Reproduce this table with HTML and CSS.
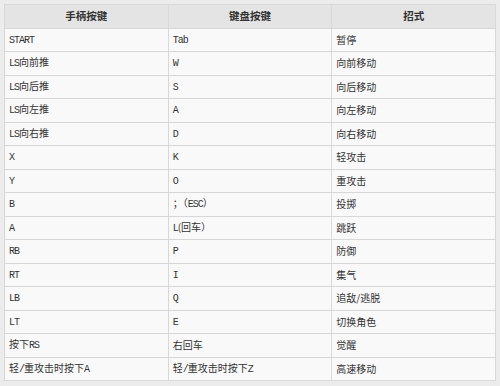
FILE: index.html
```html
<!DOCTYPE html>
<html lang="zh">
<head>
<meta charset="utf-8">
<title>按键</title>
<link rel="stylesheet" href="styles.css">
</head>
<body>
<table class="keys">
  <thead>
    <tr><th>手柄按键</th><th>键盘按键</th><th>招式</th></tr>
  </thead>
  <tbody>
    <tr><td><span class="en">START</span></td><td><span class="en">Tab</span></td><td>暂停</td></tr>
    <tr><td><span class="en">LS</span>向前推</td><td><span class="en">W</span></td><td>向前移动</td></tr>
    <tr><td><span class="en">LS</span>向后推</td><td><span class="en">S</span></td><td>向后移动</td></tr>
    <tr><td><span class="en">LS</span>向左推</td><td><span class="en">A</span></td><td>向左移动</td></tr>
    <tr><td><span class="en">LS</span>向右推</td><td><span class="en">D</span></td><td>向右移动</td></tr>
    <tr><td><span class="en">X</span></td><td><span class="en">K</span></td><td>轻攻击</td></tr>
    <tr><td><span class="en">Y</span></td><td><span class="en">O</span></td><td>重攻击</td></tr>
    <tr><td><span class="en">B</span></td><td>；（<span class="en">ESC</span>）</td><td>投掷</td></tr>
    <tr><td><span class="en">A</span></td><td><span class="en">L</span>(回车）</td><td>跳跃</td></tr>
    <tr><td><span class="en">RB</span></td><td><span class="en">P</span></td><td>防御</td></tr>
    <tr><td><span class="en">RT</span></td><td><span class="en">I</span></td><td>集气</td></tr>
    <tr><td><span class="en">LB</span></td><td><span class="en">Q</span></td><td>追敌/逃脱</td></tr>
    <tr><td><span class="en">LT</span></td><td><span class="en">E</span></td><td>切换角色</td></tr>
    <tr><td>按下<span class="en">RS</span></td><td>右回车</td><td>觉醒</td></tr>
    <tr><td>轻<span class="en">/</span>重攻击时按下<span class="en">A</span></td><td>轻<span class="en">/</span>重攻击时按下<span class="en">Z</span></td><td>高速移动</td></tr>
  </tbody>
</table>
</body>
</html>
```
FILE: styles.css
```css
html, body {
  margin: 0;
  background: #ececec;
}
body {
  padding: 4px;
  font-family: "Noto Sans CJK SC", "Liberation Sans", sans-serif;
  font-size: 10px;
  color: #333;
}
.keys {
  width: 492px;
  border-collapse: collapse;
  table-layout: fixed;
  background: #f9f9f9;
}
.keys th, .keys td {
  border: 1px solid #d8d8d8;
  height: 23.5px;
  padding: 0 0 0 4px;
  box-sizing: border-box;
  line-height: 12px;
  white-space: nowrap;
  overflow: hidden;
}
.keys th {
  background: #e4e4e4;
  font-weight: bold;
  font-size: 10.5px;
  text-align: center;
  padding: 0;
}
.keys td {
  text-align: left;
}
.en {
  font-family: "Liberation Mono", monospace;
  font-size: 10px;
  letter-spacing: -1px;
}
```
